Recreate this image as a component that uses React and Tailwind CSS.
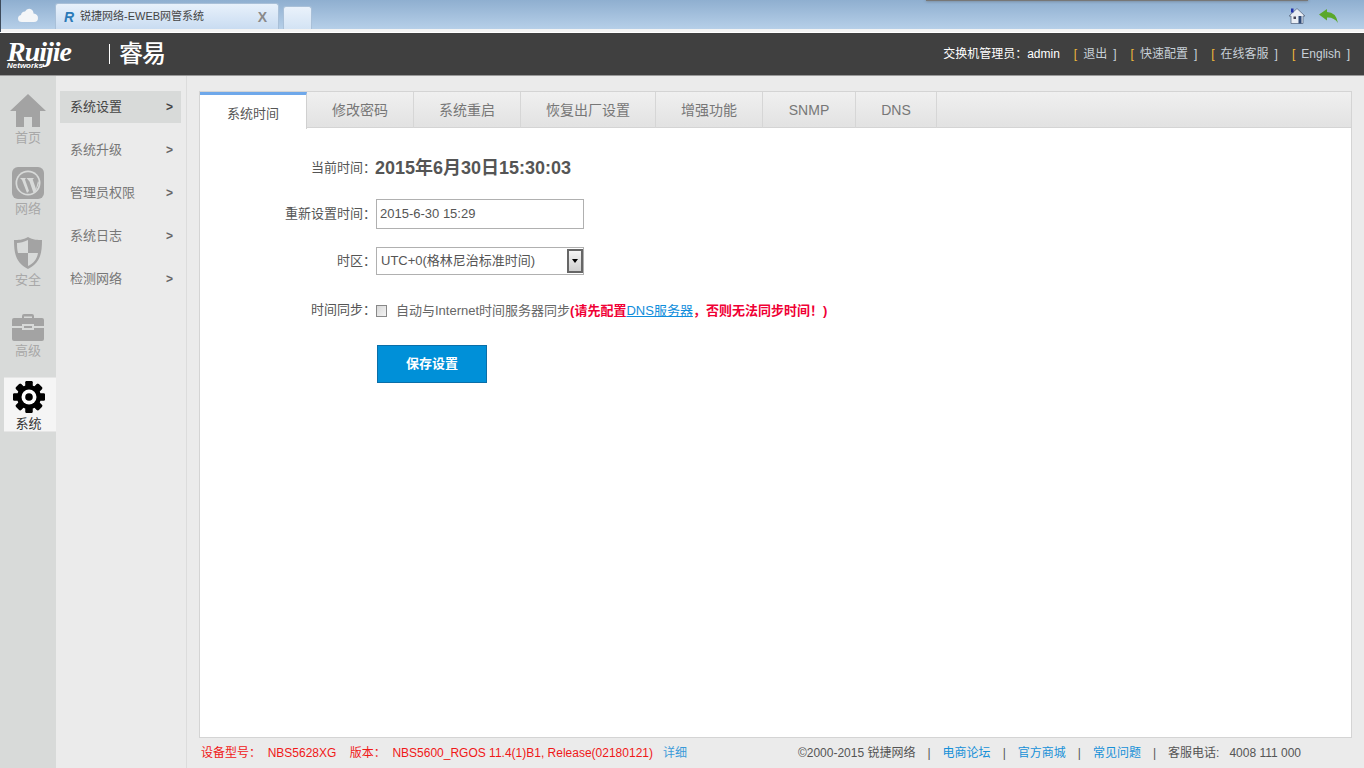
const FONT = "font-['Liberation_Sans','Noto_Sans_CJK_SC',sans-serif]";

function Home({ c = "#a3a3a3" }) {
  return (
    <svg width="38" height="34" viewBox="0 0 38 34">
      <path d="M19 0 L37 17 L31 17 L31 33 L23 33 L23 23 L15 23 L15 33 L7 33 L7 17 L1 17 Z" fill={c} />
    </svg>
  );
}
function Wp() {
  return (
    <svg width="32" height="32" viewBox="0 0 32 32">
      <rect width="32" height="32" rx="6" fill="#a3a3a3" />
      <circle cx="16" cy="16" r="12.5" fill="#d8dad9" />
      <circle cx="16" cy="16" r="10.8" fill="#a3a3a3" />
      <path d="M8 11 H14 L13 12.5 L17 24 L15 26 L10 13 Z M14.5 11 H22 L20.7 12.5 L24 22 L26 14 L27 16 L23 26 L21.5 26 L17.5 14.5 Z" fill="#d8dad9" />
    </svg>
  );
}
function Shield() {
  return (
    <svg width="30" height="34" viewBox="0 0 30 34">
      <path d="M15 1 C10 4 5 4 1 4 C1 18 3 27 15 33 C27 27 29 18 29 4 C25 4 20 4 15 1 Z" fill="#a3a3a3" />
      <path d="M15 4 C11 6 7 7 4 7 C4 10 4 14 5 17 H15 Z M15 17 V30 C21 27 24 23 25 17 Z" fill="#d8dad9" />
    </svg>
  );
}
function Case() {
  return (
    <svg width="32" height="27" viewBox="0 0 32 27">
      <path d="M10 5 V2 Q10 0 12 0 H20 Q22 0 22 2 V5 H20 V2.5 H12 V5 Z" fill="#a3a3a3" />
      <path d="M2 4 H30 Q32 4 32 6 V12 H22 V10 H10 V12 H0 V6 Q0 4 2 4 Z" fill="#a3a3a3" />
      <path d="M0 14 H10 V16 H22 V14 H32 V25 Q32 27 30 27 H2 Q0 27 0 25 Z" fill="#a3a3a3" />
      <rect x="12" y="12" width="8" height="2" fill="#a3a3a3" />
    </svg>
  );
}
function Gear() {
  const teeth = [0, 45, 90, 135, 180, 225, 270, 315];
  return (
    <svg width="32" height="32" viewBox="0 0 32 32">
      {teeth.map((a) => (
        <rect key={a} x="12.5" y="0" width="7" height="32" rx="1.2" fill="#000" transform={`rotate(${a} 16 16)`} />
      ))}
      <circle cx="16" cy="16" r="12" fill="#000" />
      <circle cx="16" cy="16" r="7.5" fill="#fff" />
      <circle cx="16" cy="16" r="3.8" fill="#000" />
    </svg>
  );
}

function RailItem({ icon, label, active }) {
  if (active) {
    return (
      <div className="h-[55px] ml-1 bg-[#f5f5f5] border-y border-[#e6e6e6] flex flex-col items-center pt-[3px] -mt-[1px]">
        <div className="h-[32px] -ml-[3px]">{icon}</div>
        <div className="text-[13px] leading-[16px] mt-[3px] -ml-[3px] text-[#333]">{label}</div>
      </div>
    );
  }
  return (
    <div className="h-[71px] flex flex-col items-center">
      <div className="h-[34px] flex items-end justify-center">{icon}</div>
      <div className="text-[13px] leading-[16px] mt-[2px] text-[#a8a8a8]">{label}</div>
    </div>
  );
}

function SubItem({ label, active }) {
  return (
    <div className={`h-[32px] mb-[11px] ml-1 mr-[5px] pl-[10px] pr-[8px] flex items-center justify-between text-[13px] ${active ? "bg-[#d8dad9] text-[#444]" : "text-[#777]"}`}>
      <span>{label}</span>
      <span className={`font-bold text-[12px] ${active ? "text-[#444]" : "text-[#666]"}`}>&gt;</span>
    </div>
  );
}

function Tab({ label, w, active }) {
  if (active) {
    return (
      <div className={`${w} h-[37px] bg-white border-t-[3px] border-[#6fa8ea] border-r border-r-[#d0d0d0] text-[#555] text-[13px] flex items-center justify-center pt-[3px] -mb-[1px] relative`}>
        {label}
      </div>
    );
  }
  return (
    <div className={`${w} h-[36px] border-r border-[#d6d6d6] text-[#777] text-[14px] flex items-center justify-center`}>{label}</div>
  );
}

function FormRow({ label, className = "", children }) {
  return (
    <div className={`flex ${className}`}>
      <div className="w-[176px] shrink-0 text-right text-[13px] text-[#555]">{label}</div>
      {children}
    </div>
  );
}

function Sep() {
  return <span className="text-[#555] mx-[12px]">|</span>;
}

export default function App() {
  return (
    <div className={`w-[1364px] h-[768px] overflow-hidden flex flex-col bg-[#ebebeb] ${FONT}`}>
      {/* browser tab strip */}
      <div className="h-[29px] shrink-0 bg-gradient-to-b from-[#8fafd0] to-[#b6cfe8] border-l border-[#3d4a5a] flex items-end relative">
        <div className="w-[54px] h-full flex items-center justify-center pt-[1px]">
          <svg width="20" height="14" viewBox="0 0 20 14">
            <path d="M4 14 Q0 14 0 10.5 Q0 7.5 3 7 Q3.5 3.5 7 3.5 Q9 0 12.5 1 Q15.5 2 15.5 5.5 Q20 6 20 10 Q20 14 16 14 Z" fill="#f4f6f8" />
          </svg>
        </div>
        <div className="w-[224px] h-[26px] bg-gradient-to-b from-[#e8f1fb] to-[#c9dcf1] border border-b-0 border-[#a9c0d8] rounded-t-[3px] flex items-center pl-[8px] text-[11px] text-[#444] relative">
          <span className="italic font-bold text-[14px] text-[#2c7ab8] w-[16px] leading-none">R</span>
          <span>锐捷网络-EWEB网管系统</span>
          <span className="absolute right-[11px] top-[3px] text-[14px] font-bold text-[#8a8a8a]">X</span>
        </div>
        <div className="w-[29px] h-[23px] ml-[4px] bg-gradient-to-b from-[#eaf2fb] to-[#d3e3f4] border border-b-0 border-[#a9c0d8] rounded-t-[3px]" />
        <div className="absolute left-[925px] top-0 w-[382px] h-[1px] bg-[#777] shadow-[0_0_3px_#555]" />
        <div className="absolute left-[1288px] top-[8px]">
          <svg width="16" height="16" viewBox="0 0 16 16">
            <path d="M8 0.5 L16 8 L14 8 L14 15.5 L2 15.5 L2 8 L0 8 Z" fill="#e8edf4" stroke="#5c6c86" strokeWidth="0.8" />
            <rect x="2" y="0.5" width="2.5" height="4" fill="#2233aa" />
            <rect x="9.5" y="8" width="3" height="7.5" fill="#2f4a78" />
            <rect x="4.5" y="8.5" width="2.5" height="2.5" fill="#445" />
          </svg>
        </div>
        <div className="absolute left-[1318px] top-[9px]">
          <svg width="19" height="14" viewBox="0 0 19 14">
            <path d="M0 5.5 L8 0 L8 3 Q17 3 19 14 Q15 8 8 8.5 L8 11.5 Z" fill="#5aa82a" />
          </svg>
        </div>
      </div>
      <div className="h-[3px] shrink-0 bg-[#f3f3f3] border-l border-[#3d4a5a]" />
      <div className="h-[1px] shrink-0 bg-white" />

      {/* product header */}
      <div className="h-[43px] shrink-0 bg-[#404040] border-b border-[#999] flex items-center justify-between text-white">
        <div className="flex items-center pl-[7px]">
          <div className="w-[96px] relative h-[34px]">
            <div className="italic font-bold text-[28px] leading-[30px] tracking-[-1px] font-['Liberation_Serif',serif] text-white">Ruijie</div>
            <div className="absolute left-[0px] top-[24px] italic font-bold text-[8px] leading-[9px]">Networks</div>
          </div>
          <div className="w-[1px] h-[20px] bg-white ml-[6px] mr-[9px]" />
          <div className="text-[24px] leading-none font-medium tracking-[-1px]">睿易</div>
        </div>
        <div className="flex items-center text-[12px] pr-[14px] text-[#c8d0d8]">
          <span className="text-white mr-[14px]">交换机管理员：admin</span>
          {["退出", "快速配置", "在线客服", "English"].map((t, i) => (
            <span key={t} className={i < 3 ? "mr-[14px]" : ""}>
              <span className="text-[#f0b93a]">[</span>
              <span className="mx-[6px]">{t}</span>
              <span>]</span>
            </span>
          ))}
        </div>
      </div>

      {/* body */}
      <div className="flex-1 flex min-h-0">
        <div className="w-[56px] shrink-0 bg-[#d8dad9] pt-[18px] flex flex-col">
          <RailItem icon={<Home />} label="首页" />
          <RailItem icon={<Wp />} label="网络" />
          <RailItem icon={<Shield />} label="安全" />
          <RailItem icon={<Case />} label="高级" />
          <RailItem icon={<Gear />} label="系统" active />
        </div>
        <div className="w-[131px] shrink-0 bg-[#ebebeb] border-r border-[#dcdcdc] pt-[15px]">
          <SubItem label="系统设置" active />
          <SubItem label="系统升级" />
          <SubItem label="管理员权限" />
          <SubItem label="系统日志" />
          <SubItem label="检测网络" />
        </div>
        <div className="flex-1 min-w-0 flex flex-col pl-[12px] pr-[12px] pt-[15px]">
          <div className="h-[647px] bg-white border border-[#d4d4d4] flex flex-col">
            <div className="h-[36px] shrink-0 bg-gradient-to-b from-[#f0f0f0] to-[#e2e2e2] border-b border-[#d4d4d4] flex">
              <Tab label="系统时间" w="w-[107px]" active />
              <Tab label="修改密码" w="w-[107px]" />
              <Tab label="系统重启" w="w-[107px]" />
              <Tab label="恢复出厂设置" w="w-[135px]" />
              <Tab label="增强功能" w="w-[107px]" />
              <Tab label="SNMP" w="w-[93px]" />
              <Tab label="DNS" w="w-[81px]" />
            </div>
            <div className="pt-[26px] flex flex-col">
              <FormRow label={<span className="leading-[28px]">当前时间：</span>} className="items-center h-[28px]">
                <span className="text-[18px] font-bold text-[#555] ml-[-1px]">2015年6月30日15:30:03</span>
              </FormRow>
              <FormRow label="重新设置时间：" className="items-center mt-[17px]">
                <div className="w-[208px] h-[30px] border border-[#b0b0b0] bg-white text-[13px] text-[#555] pl-[3px] flex items-center">2015-6-30 15:29</div>
              </FormRow>
              <FormRow label="时区：" className="items-center mt-[18px]">
                <div className="w-[208px] h-[28px] border border-[#b0b0b0] bg-white text-[13px] text-[#555] pl-[4px] flex items-center justify-between">
                  <span>UTC+0(格林尼治标准时间)</span>
                  <div className="w-[16px] h-[24px] mr-[0px] border-2 border-[#666] bg-gradient-to-b from-[#f4f4f4] to-[#cfcfcf] flex items-center justify-center">
                    <div className="w-0 h-0 border-x-[3px] border-x-transparent border-t-[4px] border-t-black" />
                  </div>
                </div>
              </FormRow>
              <FormRow label="时间同步：" className="items-center mt-[24px]">
                <div className="flex items-center text-[13px] text-[#666] h-[20px] mt-[2px]">
                  <div className="w-[11px] h-[12px] border border-[#888] bg-gradient-to-br from-[#d8d8d8] to-[#f4f4f4] mr-[9px]" />
                  <span>自动与Internet时间服务器同步</span>
                  <span className="font-bold text-[#f00035]">(请先配置</span>
                  <span className="underline text-[#0f8ddb]">DNS服务器</span>
                  <span className="font-bold text-[#f00035]">，否则无法同步时间！)</span>
                </div>
              </FormRow>
              <div className="ml-[177px] mt-[24px] w-[110px] h-[38px] bg-[#0090d8] border border-[#0a6ea8] text-white text-[13px] font-bold flex items-center justify-center">保存设置</div>
            </div>
          </div>
          <div className="flex-1 flex items-center justify-between text-[12px] pb-[1px]">
            <div className="text-[#f01818] whitespace-pre pl-[2px]">
              <span>设备型号：  NBS5628XG    版本：  NBS5600_RGOS 11.4(1)B1, Release(02180121)   </span>
              <span className="text-[#3a9ad9]">详细</span>
            </div>
            <div className="flex text-[#555] pr-[51px]">
              <span>©2000-2015 锐捷网络</span>
              <Sep />
              <span className="text-[#1690d8]">电商论坛</span>
              <Sep />
              <span className="text-[#1690d8]">官方商城</span>
              <Sep />
              <span className="text-[#1690d8]">常见问题</span>
              <Sep />
              <span>客服电话:</span>
              <span className="ml-[10px]">4008 111 000</span>
            </div>
          </div>
        </div>
      </div>
    </div>
  );
}
